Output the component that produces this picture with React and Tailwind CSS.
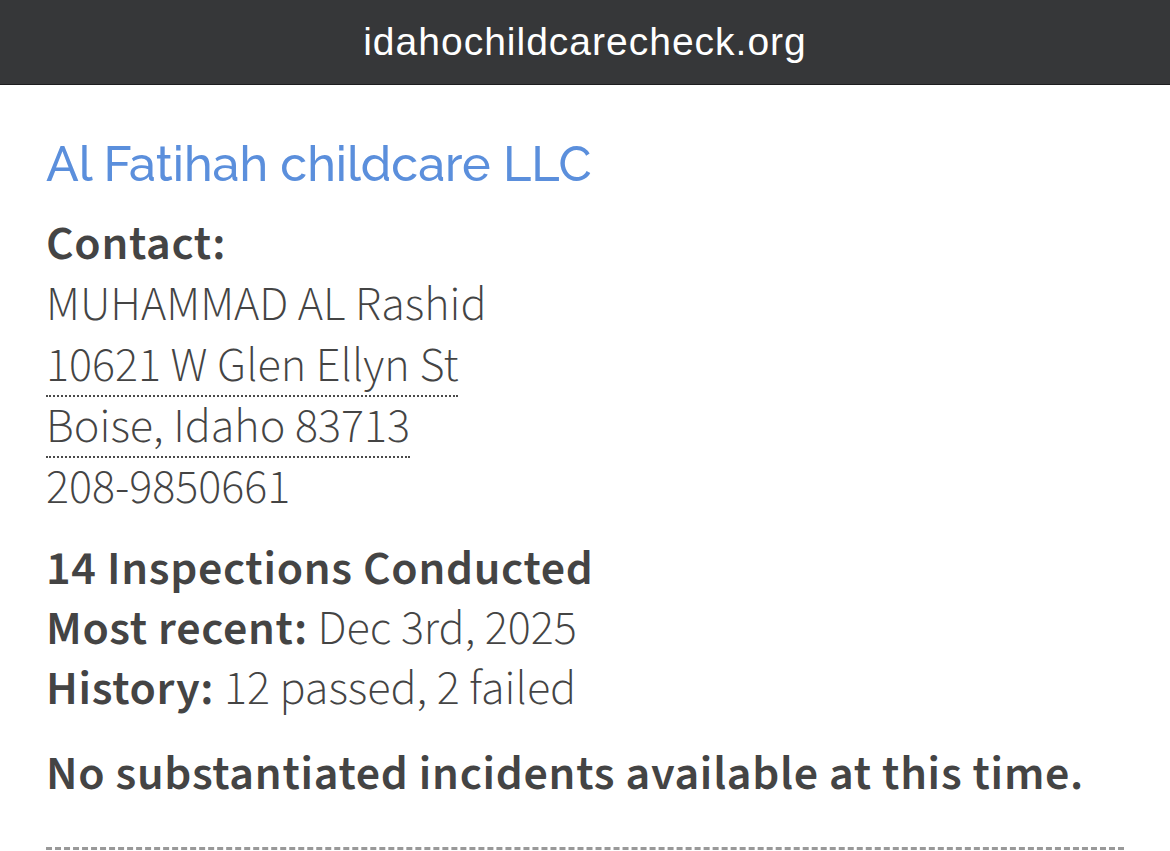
export default function App() {
  return (
    <div className="min-h-screen bg-white font-['Source_Sans_3','Lato',sans-serif]">
      <div className="h-[85px] bg-[#363739] border-b border-[#1d1d1f] flex items-center justify-center">
        <span className="text-white text-[39px] tracking-[1px] font-['Liberation_Sans',sans-serif]">idahochildcarecheck.org</span>
      </div>
      <div className="px-[46px] pt-[50px] text-[#444]">
        <h1 className="font-['Raleway','Lato',sans-serif] text-[48.5px] leading-[58px] font-medium text-[#5b8fdc]">
          Al Fatihah childcare LLC
        </h1>
        <div className="mt-[21px] text-[48px] leading-[61px]">
          <div className="font-semibold tracking-[0.7px]">Contact:</div>
          <div className="font-light">MUHAMMAD AL Rashid</div>
          <div className="w-fit pt-px font-light leading-[58px] border-b-2 border-dotted border-[#4a4a4a]">10621 W Glen Ellyn St</div>
          <div className="w-fit pt-px font-light leading-[58px] border-b-2 border-dotted border-[#4a4a4a]">Boise, Idaho 83713</div>
          <div className="font-light">208-9850661</div>
        </div>
        <div className="mt-[20px] text-[48px] leading-[60px]">
          <div className="font-semibold tracking-[0.7px]">14 Inspections Conducted</div>
          <div>
            <span className="font-semibold tracking-[0.7px]">Most recent:</span> <span className="font-light">Dec 3rd, 2025</span>
          </div>
          <div>
            <span className="font-semibold tracking-[0.7px]">History:</span> <span className="font-light">12 passed, 2 failed</span>
          </div>
        </div>
        <p className="mt-[25px] text-[48px] leading-[60px] font-semibold tracking-[0.7px]">No substantiated incidents available at this time.</p>
        <div className="mt-[43px] border-t-[3px] border-dashed border-[#999]"></div>
      </div>
    </div>
  );
}
